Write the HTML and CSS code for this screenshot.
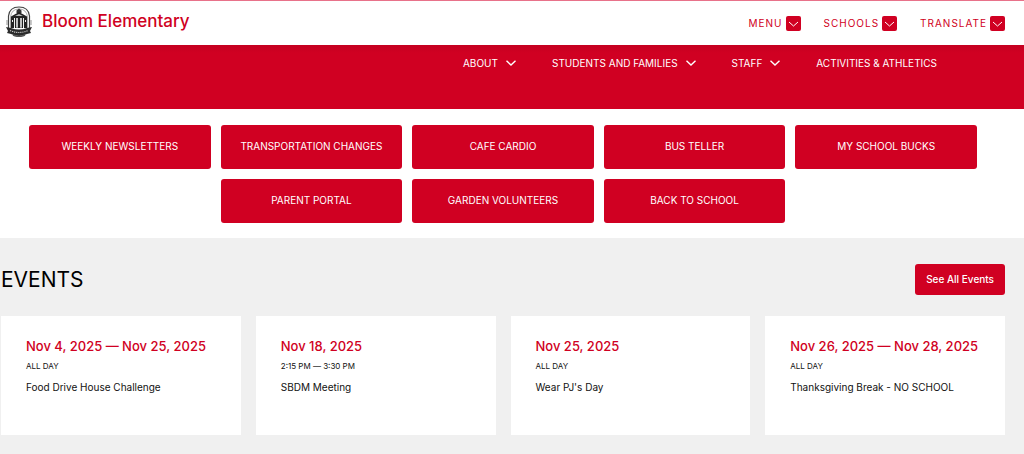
FILE: index.html
```html
<!DOCTYPE html>
<html lang="en">
<head>
<meta charset="utf-8">
<meta name="viewport" content="width=device-width, initial-scale=1">
<title>Bloom Elementary</title>
<link rel="stylesheet" href="styles.css">
</head>
<body>
<header class="topbar">
  <a class="brand" href="#">
    <svg class="crest" viewBox="0 0 26 31" aria-hidden="true">
      <path d="M2.500 22V10Q3.500 1 13 1t10.500 9v12" fill="#fff" stroke="#444" stroke-width="1.2"/>
      <path d="M4.500 22V11Q5.500 3 13 3t8.500 8v11" fill="none" stroke="#888" stroke-width=".7"/>
      <path d="M10.500 7V4.500L13 2.500l2.500 2V7" fill="#333"/>
      <path d="M5 10.500L13 6l8 4.500v1.500H5z" fill="#222"/>
      <path d="M9 10l4-2 4 2z" fill="#bbb"/>
      <path d="M5 12h3v10H5zM9 12h1.500v10H9zM11.500 12h3v10h-3zM15.500 12h1.500v10h-1.500zM18 12h3v10h-3z" fill="#222"/>
      <path d="M8 12h1v9H8zM10.500 12h1v9h-1zM14.500 12h1v9h-1zM17 12h1v9h-1zM6 14h1v2H6zM19 14h1v2h-1z" fill="#eee"/>
      <path d="M0 21l5 1q8 3 16 0l5-1-2 4 1 2-4 1q-8 4-16 0l-4-1 1-2z" fill="#2b2b2b"/>
      <path d="M4 24.500q9 4 18 0" fill="none" stroke="#ccc" stroke-width="1.2" stroke-dasharray="1.200 .9"/>
      <path d="M7 29q6 3 12 0" fill="none" stroke="#555" stroke-width="1.4"/>
      <path d="M1 14v5M25 14v5" stroke="#777" stroke-width=".8"/>
    </svg>
    <span>Bloom Elementary</span>
  </a>
  <div class="tools">
    <button class="tool" type="button">MENU<span class="chip"><svg viewBox="0 0 15 15" aria-hidden="true"><path d="M3 6l4.500 4 4.500-4"/></svg></span></button>
    <button class="tool" type="button">SCHOOLS<span class="chip"><svg viewBox="0 0 15 15" aria-hidden="true"><path d="M3 6l4.500 4 4.500-4"/></svg></span></button>
    <button class="tool" type="button">TRANSLATE<span class="chip"><svg viewBox="0 0 15 15" aria-hidden="true"><path d="M3 6l4.500 4 4.500-4"/></svg></span></button>
  </div>
</header>
<nav class="mainnav" aria-label="Main">
  <button class="navitem" type="button">ABOUT<svg viewBox="0 0 10 6" aria-hidden="true"><path d="M.5 .8L5 5 9.500 .8"/></svg></button>
  <button class="navitem" type="button">STUDENTS AND FAMILIES<svg viewBox="0 0 10 6" aria-hidden="true"><path d="M.5 .8L5 5 9.500 .8"/></svg></button>
  <button class="navitem" type="button">STAFF<svg viewBox="0 0 10 6" aria-hidden="true"><path d="M.5 .8L5 5 9.500 .8"/></svg></button>
  <a class="navitem" href="#">ACTIVITIES &amp; ATHLETICS</a>
</nav>
<main>
  <section class="links" aria-label="Quick links">
    <a class="link" href="#">WEEKLY NEWSLETTERS</a>
    <a class="link" href="#">TRANSPORTATION CHANGES</a>
    <a class="link" href="#">CAFE CARDIO</a>
    <a class="link" href="#">BUS TELLER</a>
    <a class="link" href="#">MY SCHOOL BUCKS</a>
    <a class="link" href="#">PARENT PORTAL</a>
    <a class="link" href="#">GARDEN VOLUNTEERS</a>
    <a class="link" href="#">BACK TO SCHOOL</a>
  </section>
  <section class="events">
    <div class="events-head">
      <h2>EVENTS</h2>
      <a class="all" href="#">See All Events</a>
    </div>
    <div class="cards">
      <article class="card"><h3>Nov 4, 2025 — Nov 25, 2025</h3><p class="time">ALL DAY</p><p class="what">Food Drive House Challenge</p></article>
      <article class="card"><h3>Nov 18, 2025</h3><p class="time">2:15 PM — 3:30 PM</p><p class="what">SBDM Meeting</p></article>
      <article class="card"><h3>Nov 25, 2025</h3><p class="time">ALL DAY</p><p class="what">Wear PJ's Day</p></article>
      <article class="card"><h3>Nov 26, 2025 — Nov 28, 2025</h3><p class="time">ALL DAY</p><p class="what">Thanksgiving Break - NO SCHOOL</p></article>
    </div>
  </section>
</main>
</body>
</html>
```
FILE: styles.css
```css
:root {
  --red: #d00022;
}
* {
  box-sizing: border-box;
}
body {
  margin: 0;
  background: #f0f0f0;
  color: #111;
  font-family: Inter, "Liberation Sans", sans-serif;
  font-size: 10px;
}
h2, h3, p {
  margin: 0;
}
a {
  color: inherit;
  text-decoration: none;
}
button {
  padding: 0;
  border: 0;
  background: none;
  color: inherit;
  font: inherit;
  cursor: pointer;
}
.topbar {
  display: flex;
  align-items: center;
  justify-content: space-between;
  min-height: 45px;
  padding: 0 19px 0 6px;
  border-top: 1px solid #e8728a;
  background: #fff;
  color: var(--red);
}
.brand {
  display: flex;
  align-items: center;
  gap: 10px;
  padding-bottom: 4px;
  font-size: 17px;
  font-weight: 500;
  line-height: 24px;
}
.crest {
  width: 26px;
  height: 31px;
}
.tools {
  display: flex;
  gap: 23px;
}
.tool {
  display: flex;
  align-items: center;
  gap: 3px;
  letter-spacing: 1px;
}
.chip {
  display: flex;
  border-radius: 2px;
  background: var(--red);
}
.chip svg {
  width: 15px;
  height: 15px;
  fill: none;
  stroke: #fff;
}
.mainnav {
  display: flex;
  align-items: flex-start;
  justify-content: flex-end;
  gap: 36px;
  min-height: 64px;
  padding: 10px 87px 10px 20px;
  background: linear-gradient(#c40020, var(--red) 8px);
  color: #fff;
}
.navitem {
  display: flex;
  align-items: center;
  gap: 8px;
  line-height: 16px;
}
.navitem svg {
  width: 10px;
  height: 6px;
  fill: none;
  stroke: #fff;
  stroke-width: 1.4;
}
.links {
  display: flex;
  flex-wrap: wrap;
  justify-content: center;
  gap: 10px;
  padding: 16px 47px 15px 29px;
  background: #fff;
}
.link {
  display: flex;
  align-items: center;
  justify-content: center;
  width: calc((100% - 40px) / 5);
  min-height: 44px;
  padding: 0 10px 2px;
  border-radius: 3px;
  background: var(--red);
  color: #fff;
}
.events {
  padding: 26px 19px 19px 1px;
}
.events-head {
  display: flex;
  align-items: center;
  justify-content: space-between;
  margin-bottom: 21px;
}
.events-head h2 {
  color: #000;
  font-size: 21px;
  font-weight: 400;
  line-height: 28px;
}
.all {
  padding: 8px 11px;
  border-radius: 3px;
  background: var(--red);
  color: #fff;
  font-weight: 500;
  line-height: 15px;
}
.cards {
  display: grid;
  grid-template-columns: repeat(4, minmax(0, 1fr));
  gap: 15px;
}
.card {
  min-height: 119px;
  padding: 20px 25px;
  background: #fff;
}
.card h3 {
  color: var(--red);
  font-size: 13px;
  font-weight: 500;
  line-height: 20px;
  white-space: nowrap;
}
.time {
  margin: 4px 0 8px;
  font-size: 8px;
  line-height: 12px;
}
.what {
  line-height: 14px;
}
```
